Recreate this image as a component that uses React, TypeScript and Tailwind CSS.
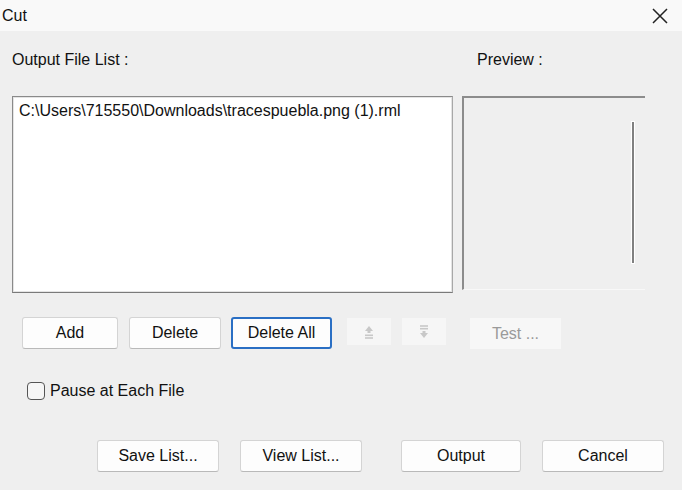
import React from 'react';

const font = { fontFamily: '"Liberation Sans", Arial, sans-serif' };

function Btn({ label, className = '', focused = false }: { label: string; className?: string; focused?: boolean }) {
  return (
    <div
      className={
        'flex items-center justify-center h-[32px] rounded-[3px] text-[16px] text-[#111] ' +
        (focused
          ? 'border-2 border-[#2a6fc4] bg-[#fdfdfd]'
          : 'border border-[#d4d4d4] border-b-[#b9b9b9] bg-[#fdfdfd]') +
        ' ' +
        className
      }
    >
      {label}
    </div>
  );
}

function ArrowBtn({ down = false }: { down?: boolean }) {
  return (
    <div className="w-[44px] h-[27px] bg-[#f6f6f6] flex items-center justify-center">
      <svg width="12" height="16" viewBox="0 0 12 16" className={down ? 'rotate-180' : ''}>
        <path d="M6 2 L2 7 H4.5 V9 H7.5 V7 H10 Z" fill="#c8c8c8" />
        <rect x="2" y="10.5" width="8" height="1.6" fill="#c8c8c8" />
        <rect x="2" y="13.2" width="8" height="1.6" fill="#c8c8c8" />
      </svg>
    </div>
  );
}

export default function App() {
  return (
    <div className="w-[682px] h-[490px] bg-[#efefef] flex flex-col overflow-hidden" style={font}>
      {/* Title bar */}
      <div className="h-[31px] bg-[#f9f9f9] flex items-center justify-between pl-[2px] pr-[13px] shrink-0">
        <span className="text-[16px] text-[#111]">Cut</span>
        <svg width="18" height="18" viewBox="0 0 18 18">
          <path d="M2 2 L16 16 M16 2 L2 16" stroke="#222" strokeWidth="1.5" />
        </svg>
      </div>

      {/* Labels */}
      <div className="flex mt-[20px] h-[18px] items-center text-[16px] text-[#111]">
        <span className="ml-[12px] w-[465px]">Output File List :</span>
        <span>Preview :</span>
      </div>

      {/* List + preview */}
      <div className="flex mt-[27px] h-[197px]">
        <div className="ml-[12px] w-[441px] h-full bg-white border border-[#8a8a8a] border-r-[#a8a8a8] border-b-[#7a7a7a]">
          <div className="h-full border border-[#e4e4e4] px-[5px] pt-[4px] text-[16px] text-[#111] leading-[18px]">
            C:\Users\715550\Downloads\tracespuebla.png (1).rml
          </div>
        </div>
        <div className="ml-[9px] w-[183px] h-[194px] border-l-2 border-t-2 border-[#8c8c8c] border-b border-b-[#f8f8f8] flex justify-end pt-[24px]">
          <div className="w-[2px] h-[141px] bg-[#808080] mr-[11px] outline outline-1 outline-white" />
        </div>
      </div>

      {/* Action buttons */}
      <div className="flex mt-[24px] items-start">
        <Btn label="Add" className="ml-[22px] w-[96px]" />
        <Btn label="Delete" className="ml-[11px] w-[92px]" />
        <Btn label="Delete All" focused className="ml-[10px] w-[101px]" />
        <div className="ml-[15px] mt-[1px]"><ArrowBtn /></div>
        <div className="ml-[11px] mt-[1px]"><ArrowBtn down /></div>
        <div className="ml-[24px] mt-[1px] w-[91px] h-[31px] bg-[#f7f7f7] flex items-center justify-center text-[16px] text-[#9a9a9a]">
          Test ...
        </div>
      </div>

      {/* Checkbox */}
      <div className="flex items-center mt-[33px] ml-[27px] h-[18px]">
        <div className="w-[18px] h-[18px] rounded-[4px] border border-[#555] bg-[#f6f6f6]" />
        <span className="ml-[5px] text-[16px] text-[#111]">Pause at Each File</span>
      </div>

      {/* Bottom buttons */}
      <div className="flex mt-[40px]">
        <Btn label="Save List..." className="ml-[97px] w-[122px] h-[31px]" />
        <Btn label="View List..." className="ml-[21px] w-[122px] h-[31px]" />
        <Btn label="Output" className="ml-[39px] w-[120px] h-[31px]" />
        <Btn label="Cancel" className="ml-[21px] w-[122px] h-[31px]" />
      </div>
    </div>
  );
}
